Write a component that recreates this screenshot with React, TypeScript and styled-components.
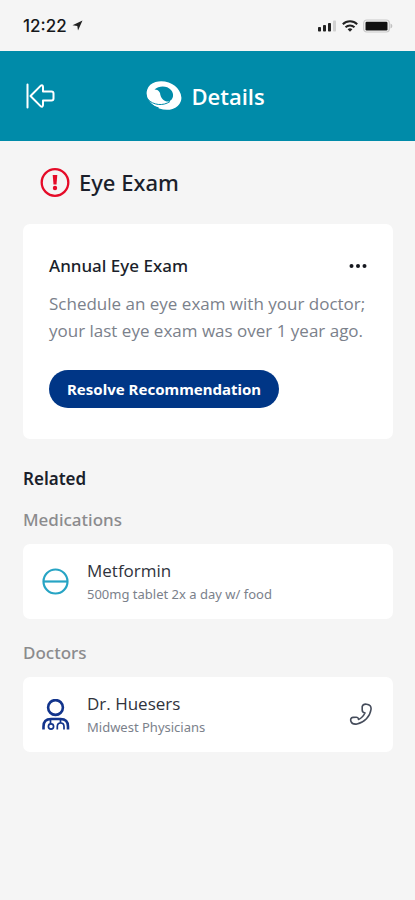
import React from "react";
import styled, { createGlobalStyle } from "styled-components";

const GlobalStyle = createGlobalStyle`
  *, *::before, *::after { box-sizing: border-box; }
  body {
    margin: 0;
    background: #f5f5f5;
    color: #1b1f2b;
    font-family: "Noto Sans", "Open Sans", sans-serif;
  }
  h1, h2, h3, h4, p { margin: 0; }
  svg { display: block; flex: none; }
`;

const Screen = styled.div`
  min-height: 100vh;
  background: #f5f5f5;
`;

const StatusBar = styled.div`
  display: flex;
  align-items: center;
  justify-content: space-between;
  height: 51px;
  padding: 0 22px 0 23px;
`;

const StatusGroup = styled.div`
  display: flex;
  align-items: center;
  gap: 5px;
`;

const Clock = styled.time`
  font-family: Inter, sans-serif;
  font-size: 17px;
  line-height: 20px;
  font-weight: 500;
  color: #16181b;
`;

const Header = styled.header`
  display: grid;
  grid-template-columns: 32px 1fr 36px;
  align-items: center;
  height: 90px;
  padding: 0 24px;
  background: #008ba9;
  color: #fff;
`;

const IconButton = styled.button`
  display: flex;
  align-items: center;
  justify-content: center;
  padding: 0;
  border: 0;
  background: none;
  color: inherit;
  cursor: pointer;
`;

const Brand = styled.div`
  display: flex;
  align-items: center;
  justify-content: center;
  gap: 9px;
`;

const HeaderTitle = styled.h1`
  font-size: 22px;
  line-height: 32px;
  font-weight: 600;
  font-family: "Open Sans", sans-serif;
`;

const Main = styled.main`
  padding: 24px 22px 24px 23px;
`;

const Topic = styled.div`
  display: flex;
  align-items: center;
  gap: 9px;
  padding-left: 17px;
  margin-bottom: 24px;
`;

const TopicTitle = styled.h2`
  font-size: 22px;
  line-height: 35px;
  font-weight: 500;
`;

const Card = styled.section`
  padding: 28px 26px 31px;
  border-radius: 7px;
  background: #fff;
`;

const CardHead = styled.div`
  display: flex;
  align-items: center;
  justify-content: space-between;
  margin-bottom: 10px;
`;

const CardTitle = styled.h3`
  font-size: 17px;
  line-height: 28px;
  font-weight: 500;
`;

const CardText = styled.p`
  margin-bottom: 26px;
  font-family: "Open Sans", sans-serif;
  font-size: 17px;
  line-height: 27px;
  color: #7b818b;
`;

const PillButton = styled.button`
  height: 38px;
  padding: 0 18px;
  border: 0;
  border-radius: 19px;
  background: #003686;
  color: #fff;
  font: 700 15px/24px "Noto Sans", "Open Sans", sans-serif;
  white-space: nowrap;
  cursor: pointer;
`;

const SectionTitle = styled.h2`
  margin-top: 28px;
  font-size: 17px;
  line-height: 24px;
  font-weight: 600;
`;

const GroupTitle = styled.h3<{ $first?: boolean }>`
  margin: ${(p) => (p.$first ? 17 : 22)}px 0 12px;
  font-size: 17px;
  line-height: 24px;
  font-weight: 500;
  color: #8b8b8d;
`;

const ItemCard = styled.article`
  display: grid;
  grid-template-columns: 28px 1fr auto;
  align-items: center;
  column-gap: 17px;
  height: 75px;
  padding: 0 20px 0 19px;
  border-radius: 7px;
  background: #fff;
`;

const ItemName = styled.h4`
  font-family: "Open Sans", sans-serif;
  font-size: 17px;
  line-height: 25px;
  font-weight: 400;
  color: #30333c;
`;

const ItemNote = styled.p`
  font-size: 13px;
  line-height: 23px;
  color: #7b818b;
`;

const LocationIcon = () => (
  <svg width="11" height="11" viewBox="0 0 11 11" aria-hidden="true">
    <path d="M10.5.5 6 10.5 5.3 6 .5 5.2Z" fill="#222" />
  </svg>
);

const SignalIcon = () => (
  <svg width="19" height="12" viewBox="0 0 19 12" aria-hidden="true">
    <g fill="#222">
      <rect x="0" y="7" width="3" height="4.500" rx=".8" />
      <rect x="5" y="5" width="3" height="6.500" rx=".8" />
      <rect x="10" y="3" width="3" height="8.500" rx=".8" />
    </g>
    <rect x="15" y="0.500" width="3" height="11" rx=".8" fill="#d0d0d0" />
  </svg>
);

const WifiIcon = () => (
  <svg width="16" height="12" viewBox="0 0 16 12" aria-hidden="true">
    <g fill="none" stroke="#222" strokeWidth="2">
      <path d="M.8 4.300a10.300 10.300 0 0 1 14.400 0" />
      <path d="M3.500 7.300a6.500 6.500 0 0 1 9 0" />
    </g>
    <path d="M5.600 9.300a3.500 3.500 0 0 1 4.800 0L8 11.800Z" fill="#222" />
  </svg>
);

const BatteryIcon = () => (
  <svg width="30" height="14" viewBox="0 0 30 14" aria-hidden="true">
    <rect x=".7" y="1" width="25.600" height="12" rx="3" fill="none" stroke="#c9c9c9" strokeWidth="1.200" />
    <rect x="2.500" y="2.800" width="22" height="8.600" rx="1.200" fill="#111" />
    <path d="M27.500 4.500c2.400.8 2.400 4.200 0 5Z" fill="#c2c2c2" />
  </svg>
);

const BackIcon = () => (
  <svg width="32" height="28" viewBox="0 0 32 28" fill="none" stroke="currentColor" strokeWidth="2" strokeLinecap="round" strokeLinejoin="round" aria-hidden="true">
    <path d="M3.500 2.500v23M6.500 14 16.800 3.600Q18.700 2.700 19 4.800V9.500H27.500Q29.500 9.500 29.500 11.500V16.500Q29.500 18.500 27.500 18.500H19V23.200Q18.700 25.300 16.800 24.400Z" />
  </svg>
);

const LogoIcon = () => (
  <svg width="36" height="32" viewBox="0 0 36 32" aria-hidden="true">
    <ellipse cx="18" cy="15.500" rx="17.800" ry="13.800" transform="rotate(20 18 15.500)" fill="currentColor" />
    <path d="M2 19.500C7 25 17 26.500 24 21.500" fill="none" stroke="#008ba9" strokeWidth="1" />
    <path fill="#008ba9" d="M8.500 9.500C13 5.500 21 5.500 25 10 28.500 14 27.500 19.500 23 21.500 18.500 22 14.500 18.500 14 13 13 10.500 11 9.500 8.500 9.500Z" />
    <path fill="#008ba9" d="M0 17C2 22 7 26 13 27.500L11 29H0Z" />
  </svg>
);

const AlertIcon = () => (
  <svg width="30" height="30" viewBox="0 0 30 30" role="img" aria-label="Alert">
    <circle cx="15" cy="14.500" r="13.300" fill="none" stroke="#e50b28" strokeWidth="2.300" />
    <path d="M12.700 7h4.600l-.8 9.500h-3Z" fill="#e50b28" />
    <circle cx="15" cy="20" r="2.200" fill="#e50b28" />
  </svg>
);

const MoreIcon = () => (
  <svg width="18" height="6" viewBox="0 0 18 6" fill="#16181f" aria-hidden="true">
    <circle cx="2.500" cy="3" r="2" />
    <circle cx="9" cy="3" r="2" />
    <circle cx="15.500" cy="3" r="2" />
  </svg>
);

const TabletIcon = () => (
  <svg width="28" height="28" viewBox="0 0 28 28" fill="none" stroke="#27a4c4" strokeWidth="2.200" aria-hidden="true">
    <circle cx="13.500" cy="13.500" r="12" />
    <path d="M1.500 13.500h24" />
  </svg>
);

const DoctorIcon = () => (
  <svg width="28" height="32" viewBox="0 0 28 32" fill="none" stroke="#12348c" strokeWidth="2.600" aria-hidden="true">
    <circle cx="13.500" cy="8.500" r="7.400" />
    <path d="M1.500 30.500v-3C1.500 22.500 4.500 20 9 20h9.500c4.500 0 7.500 2.500 7.500 7.500v3" />
    <g strokeWidth="1.700">
      <path d="M8.500 21v4M18.500 21v3" />
      <circle cx="9" cy="27.500" r="2.600" />
      <path d="M15.300 30.500v-3c0-4.700 6.700-4.700 6.700 0v3" />
    </g>
  </svg>
);

const PhoneIcon = () => (
  <svg width="24" height="24" viewBox="0 0 24 24" fill="none" stroke="#454c5b" strokeWidth="1.600" strokeLinejoin="round" aria-hidden="true">
    <path d="M13.200 3.500C13.800 1.500 15.500 1 17.500 1.200 20.800 1.500 22.400 3.500 22 6.500 21 13.500 15.500 19.500 8 21 5 21.500 3 21.200 2 18.500 1.200 16.200 2 14.700 4 14.400L7 14.200C8.500 14.100 9.500 15 9.500 16.500 12 15.500 14.700 12.500 16 10 14.500 9.700 13.200 8.900 13.200 7Z" />
  </svg>
);

export default function App() {
  return (
    <Screen>
      <GlobalStyle />
      <StatusBar>
        <StatusGroup>
          <Clock>12:22</Clock>
          <LocationIcon />
        </StatusGroup>
        <StatusGroup>
          <SignalIcon />
          <WifiIcon />
          <BatteryIcon />
        </StatusGroup>
      </StatusBar>
      <Header>
        <IconButton type="button" aria-label="Back">
          <BackIcon />
        </IconButton>
        <Brand>
          <LogoIcon />
          <HeaderTitle>Details</HeaderTitle>
        </Brand>
      </Header>
      <Main>
        <Topic>
          <AlertIcon />
          <TopicTitle>Eye Exam</TopicTitle>
        </Topic>
        <Card>
          <CardHead>
            <CardTitle>Annual Eye Exam</CardTitle>
            <IconButton type="button" aria-label="More options">
              <MoreIcon />
            </IconButton>
          </CardHead>
          <CardText>Schedule an eye exam with your doctor; your last eye exam was over 1 year ago.</CardText>
          <PillButton type="button">Resolve Recommendation</PillButton>
        </Card>
        <SectionTitle>Related</SectionTitle>
        <GroupTitle $first>Medications</GroupTitle>
        <ItemCard>
          <TabletIcon />
          <div>
            <ItemName>Metformin</ItemName>
            <ItemNote>500mg tablet 2x a day w/ food</ItemNote>
          </div>
        </ItemCard>
        <GroupTitle>Doctors</GroupTitle>
        <ItemCard>
          <DoctorIcon />
          <div>
            <ItemName>Dr. Huesers</ItemName>
            <ItemNote>Midwest Physicians</ItemNote>
          </div>
          <IconButton type="button" aria-label="Call Dr. Huesers">
            <PhoneIcon />
          </IconButton>
        </ItemCard>
      </Main>
    </Screen>
  );
}
